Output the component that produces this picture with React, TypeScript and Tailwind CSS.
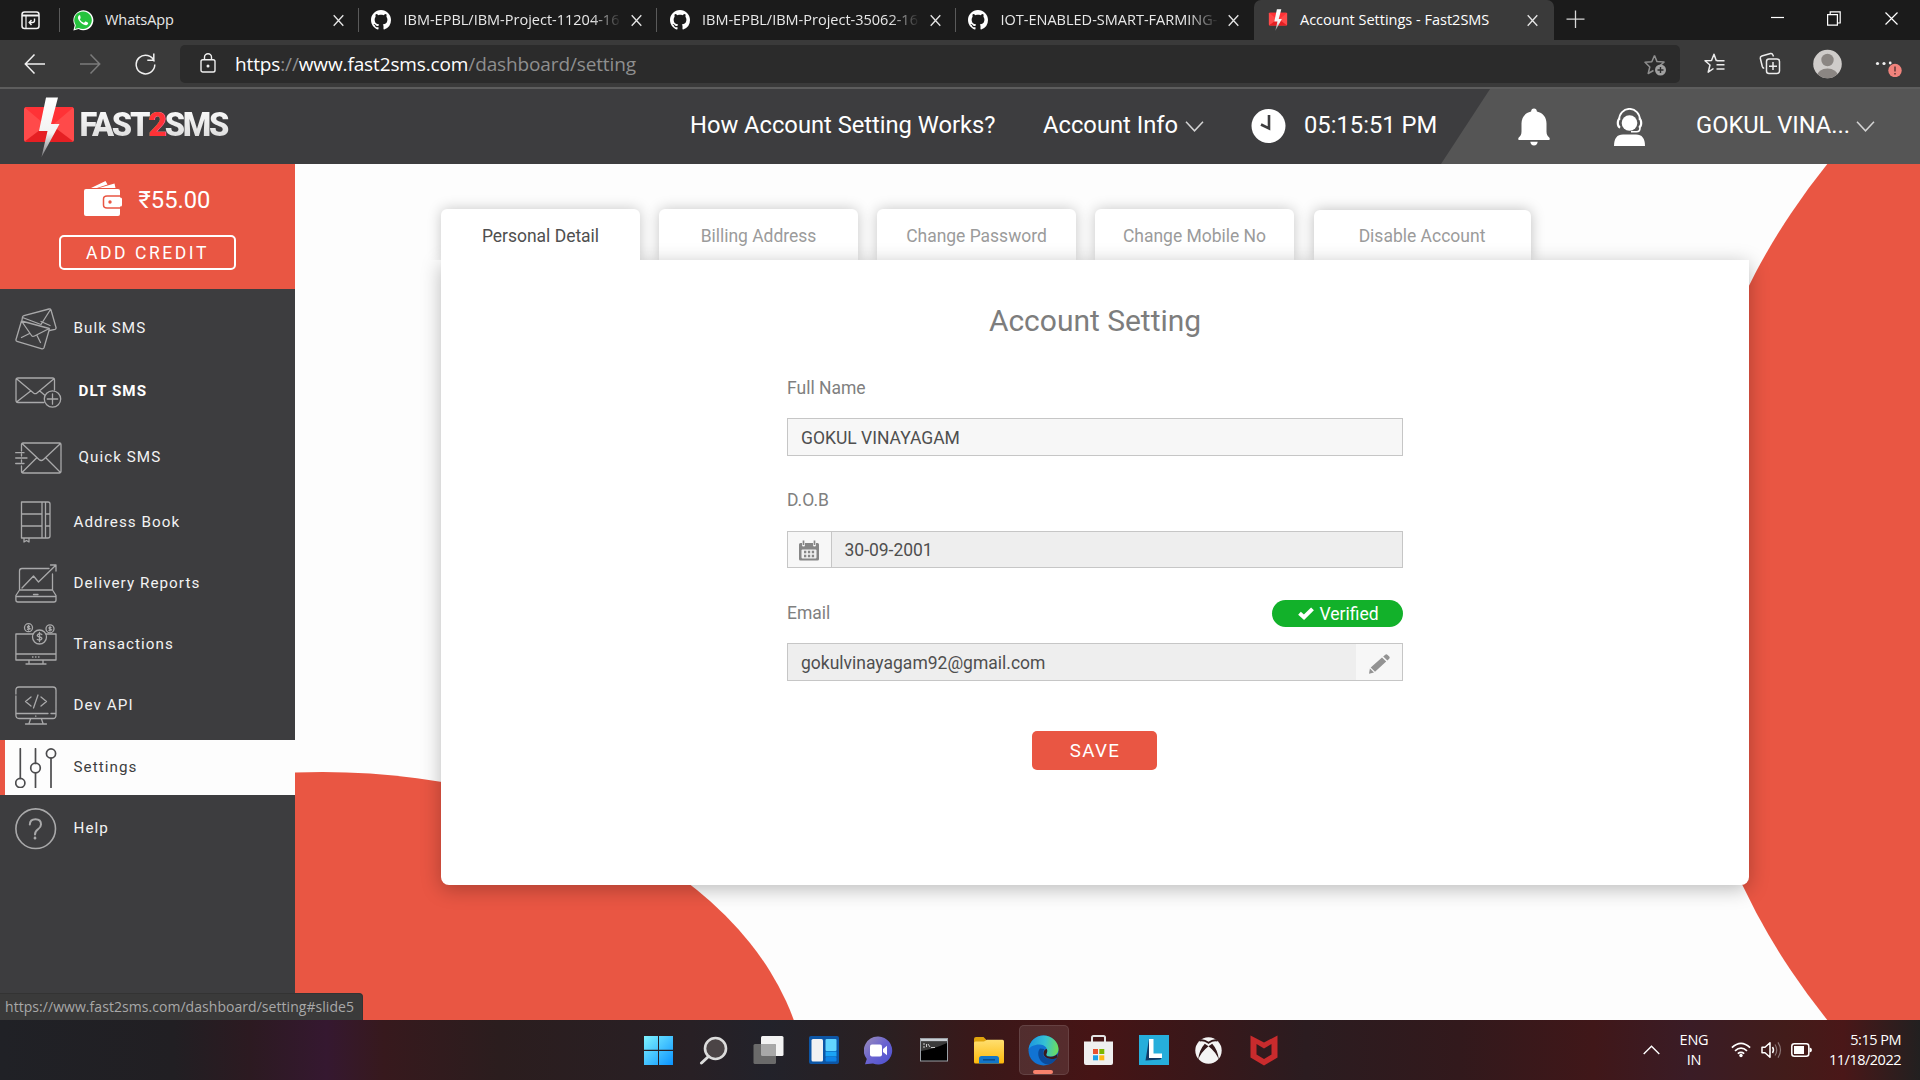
import type { ReactNode } from "react";

const ui = "font-['Open_Sans','Noto_Sans',sans-serif]";

/* ---------- shared icons ---------- */

function CloseX({ className = "" }: { className?: string }) {
  return (
    <svg className={className} width="11" height="13" viewBox="0 0 11 13" fill="none" stroke="#e6e6e6" strokeWidth="1.3">
      <path d="M.7 1.2 10.3 11.8M10.3 1.2.7 11.8" />
    </svg>
  );
}

function GitHubMark() {
  return (
    <svg width="20" height="20" viewBox="0 0 16 16" fill="#fff">
      <path d="M8 0C3.58 0 0 3.58 0 8c0 3.54 2.29 6.53 5.47 7.59.4.07.55-.17.55-.38 0-.19-.01-.82-.01-1.49-2.01.37-2.53-.49-2.69-.94-.09-.23-.48-.94-.82-1.13-.28-.15-.68-.52-.01-.53.63-.01 1.08.58 1.23.82.72 1.21 1.87.87 2.33.66.07-.52.28-.87.51-1.07-1.78-.2-3.64-.89-3.64-3.95 0-.87.31-1.59.82-2.15-.08-.2-.36-1.02.08-2.12 0 0 .67-.21 2.2.82.64-.18 1.32-.27 2-.27s1.36.09 2 .27c1.53-1.04 2.2-.82 2.2-.82.44 1.1.16 1.92.08 2.12.51.56.82 1.27.82 2.15 0 3.07-1.87 3.75-3.65 3.95.29.25.54.73.54 1.48 0 1.07-.01 1.93-.01 2.2 0 .21.15.46.55.38A8.01 8.01 0 0 0 16 8c0-4.42-3.58-8-8-8z" />
    </svg>
  );
}

function WhatsAppMark() {
  return (
    <svg width="21" height="21" viewBox="0 0 21 21">
      <path d="M.4 20.4 1.7 15.3A10 10 0 1 1 5.6 19.1Z" fill="#fff" />
      <path d="M1.8 19 2.8 15.2A8.8 8.8 0 1 1 5.8 17.9Z" fill="#25c33d" />
      <path d="M7.2 5.6c-.3-.6-1-.5-1.4-.1-1.4 1.4-.9 3.4.2 5 1.500 2.300 3.200 3.800 5.800 4.600 1.500.4 3-.4 3.300-1.700.1-.7 0-.8-.4-1l-1.900-.9c-.4-.2-.6-.1-.8.2l-.8 1c-.2.200-.4.200-.7.100-1.600-.7-2.800-1.700-3.600-3.200-.2-.3 0-.5.200-.7.500-.6.700-.9.500-1.300Z" fill="#fff" />
    </svg>
  );
}

function BoltMail({ w, h }: { w: number; h: number }) {
  return (
    <svg className="shrink-0" width={w} height={h} viewBox="0 0 50 60">
      <defs>
        <linearGradient id="boltFade" x1="0" y1="0" x2="0" y2="1">
          <stop offset="0" stopColor="#fff" />
          <stop offset=".6" stopColor="#f2f2f2" />
          <stop offset="1" stopColor="#77777a" />
        </linearGradient>
      </defs>
      <rect y="10" width="50" height="35" rx="2.500" fill="#ff4a4a" />
      <path d="M1 44.300 25 26 49 44.300Q48.500 45 47 45H3Q1.500 45 1 44.300Z" fill="#e51f23" />
      <path d="M1 10.700Q1.500 10 3 10H47Q48.500 10 49 10.700L25 31Z" fill="#ff3236" />
      <path d="M22 .500H34L27 27H35.500L17.500 60 23.500 34H15Z" fill="url(#boltFade)" />
    </svg>
  );
}

function Chevron() {
  return (
    <svg width="19" height="12" viewBox="0 0 19 12" fill="none" stroke="#d4d4d4" strokeWidth="1.500">
      <path d="M1 .800 9.500 9.800 18 .800" />
    </svg>
  );
}

/* ---------- browser chrome ---------- */

function Tab({ icon, title, last }: { icon: ReactNode; title: string; last?: boolean }) {
  return (
    <div className="flex h-10 w-[298.500px] shrink-0 items-center pl-[12.500px]">
      <span className="flex w-[22px] shrink-0">{icon}</span>
      <span className={`ml-[10.500px] w-[218px] overflow-hidden whitespace-nowrap text-[14.500px] leading-5 text-[#e8e8e8] ${title === "WhatsApp" ? "tracking-[-0.050px]" : "[mask-image:linear-gradient(to_right,black_86%,transparent)]"}`}>
        {title}
      </span>
      <CloseX className="ml-[9.500px] mt-px shrink-0" />
      <span className={`ml-auto h-[24px] w-px ${last ? "" : "bg-[#5a5a5a]"}`} />
    </div>
  );
}

function TabStrip() {
  return (
    <div className={`flex h-10 bg-[#1b1b1b] ${ui}`}>
      <div className="flex w-[60px] shrink-0 items-center pl-[21px]">
        <svg width="19" height="19" viewBox="0 0 19 19" fill="none" stroke="#f2f2f2" strokeWidth="1.500">
          <rect x="1" y="1" width="17" height="16.500" rx="2.500" />
          <path d="M1 4.500H18" strokeWidth="2" />
          <path d="M5 5V17" strokeWidth="1.200" />
          <path d="M13.500 7.500V9.500Q13.500 11.500 11.500 11.500H8.500M10.500 9 8.200 11.500 10.500 14" strokeWidth="1.400" />
        </svg>
        <span className="ml-auto h-[24px] w-px bg-[#5a5a5a]" />
      </div>
      <Tab icon={<WhatsAppMark />} title="WhatsApp" />
      <Tab icon={<GitHubMark />} title="IBM-EPBL/IBM-Project-11204-16" />
      <Tab icon={<GitHubMark />} title="IBM-EPBL/IBM-Project-35062-16" />
      <Tab icon={<GitHubMark />} title="IOT-ENABLED-SMART-FARMING-" last />
      <div className="flex w-[300px] shrink-0 items-center rounded-t-[7px] bg-[#3a3a3a] pl-[14px]">
        <BoltMail w={20} h={22} />
        <span className="ml-3 w-[221px] whitespace-nowrap text-[14.500px] leading-5 text-white">Account Settings - Fast2SMS</span>
        <CloseX className="ml-[6px] mt-px" />
      </div>
      <svg className="ml-[12px] mt-[10px]" width="19" height="19" viewBox="0 0 19 19" stroke="#d8d8d8" strokeWidth="1.300">
        <path d="M9.500.500V18M.500 9.200H18.500" />
      </svg>
      <div className="ml-auto flex h-[36px] items-center gap-[42px] pr-[22px]">
        <svg width="14" height="14" viewBox="0 0 14 14" stroke="#fff" strokeWidth="1.200">
          <path d="M0 6.500H13" />
        </svg>
        <svg width="14" height="15" viewBox="0 0 14 15" fill="none" stroke="#fff" strokeWidth="1.200">
          <path d="M.6 3.600H10.400V14.200H.6ZM3.200 3.400V.8H13.200V12H10.600" />
        </svg>
        <svg className="ml-[2px]" width="13" height="13" viewBox="0 0 13 13" stroke="#fff" strokeWidth="1.200">
          <path d="M.500.500 12.500 12.500M12.500.500.500 12.500" />
        </svg>
      </div>
    </div>
  );
}

function AddressBar() {
  return (
    <div className={`flex h-[47px] items-center bg-[#3a3a3a] ${ui}`}>
      <svg className="ml-[24px] shrink-0" width="21" height="22" viewBox="0 0 21 22" fill="none" stroke="#f0f0f0" strokeWidth="1.500">
        <path d="M21 11H1.500M10.500 1.500 1.300 11l9.200 9.500" />
      </svg>
      <svg className="ml-[35px] shrink-0" width="21" height="22" viewBox="0 0 21 22" fill="none" stroke="#7b7b7b" strokeWidth="1.500">
        <path d="M0 11H19.500M10.500 1.500 19.700 11l-9.200 9.500" />
      </svg>
      <svg className="ml-[33.500px] shrink-0" width="21" height="22" viewBox="0 0 21 22" fill="none" stroke="#f0f0f0" strokeWidth="1.500">
        <path d="M19.300 8.500A9.300 9.300 0 1 0 19.800 11.500M18.800.500V7.200H12.300" />
      </svg>
      <div className="ml-[24.500px] flex h-[38px] w-[1500px] shrink-0 items-center rounded-[5px] bg-[#2b2b2b] pl-[20px] pr-[13px]">
        <svg className="-mt-[2px]" width="16" height="20" viewBox="0 0 16 20" fill="none" stroke="#f0f0f0" strokeWidth="1.400">
          <rect x="1" y="6.700" width="14" height="12.300" rx="1.800" />
          <path d="M4.500 6.700V4.300a3.500 3.500 0 0 1 7 0V6.700" />
          <circle cx="8" cy="13" r=".8" fill="#f0f0f0" />
        </svg>
        <span className="ml-[19px] whitespace-nowrap text-[19px] leading-6 tracking-[-0.130px] text-[#8f8f8f]">
          <span className="text-white">https</span>://<span className="text-white">www.fast2sms.com</span>/dashboard/setting
        </span>
        <svg className="ml-auto mt-[2px]" width="23" height="22" viewBox="0 0 23 22">
          <path d="M10.500 1.500 13 7.600 20 8.100 15.500 12M9.500 16.500 4.200 19.500 5.800 13 1 8.300 7.800 7.700 10.500 1.500" fill="none" stroke="#8e8e8e" strokeWidth="1.500" strokeLinejoin="round" />
          <circle cx="16.500" cy="16" r="5.500" fill="#a0a0a0" />
          <path d="M16.500 13V19M13.500 16H19.500" stroke="#2b2b2b" strokeWidth="1.400" />
        </svg>
      </div>
      <svg className="ml-[24px] shrink-0" width="21" height="21" viewBox="0 0 21 21" fill="none" stroke="#ececec" strokeWidth="1.500" strokeLinejoin="round">
        <path d="M13.500 7.500H12.200L10 1.200 7.500 7.500 1 7.700 6 12 4.200 19.200 9.500 15.500M13 7.700H20.500M12.500 11.700H20.500M12.500 16H20.500" />
      </svg>
      <svg className="ml-[33.500px] shrink-0" width="22" height="23" viewBox="0 0 22 23" fill="none" stroke="#ececec" strokeWidth="1.500">
        <rect x="7.500" y="7" width="13" height="14.500" rx="2.500" />
        <path d="M14 10V18M10 14.200H18M14.500 4.500 13.800 2.800Q13.200 1.200 11.500 1.600L2.800 4Q1 4.600 1.300 6.300L3.300 14.500Q3.800 16.200 5.200 16.200" />
      </svg>
      <svg className="ml-[32.500px] shrink-0" width="29" height="34" viewBox="0 0 29 34">
        <clipPath id="avatarClip">
          <circle cx="14.500" cy="17" r="14.300" />
        </clipPath>
        <circle cx="14.500" cy="17" r="14.300" fill="#cfccca" />
        <g clipPath="url(#avatarClip)" fill="#8b8683">
          <circle cx="14.500" cy="13" r="6.200" />
          <ellipse cx="14.500" cy="29" rx="10.500" ry="7.500" />
        </g>
      </svg>
      <svg className="ml-[33px] shrink-0" width="28" height="26" viewBox="0 0 28 26">
        <g fill="#f0f0f0">
          <circle cx="2.500" cy="12.500" r="1.600" />
          <circle cx="9" cy="12.500" r="1.600" />
          <circle cx="15.200" cy="12" r="1.400" />
        </g>
        <circle cx="20" cy="19.500" r="6.700" fill="#f1837c" />
        <path d="M20 15.500V20.500M20 22V23.500" stroke="#4a2b2b" strokeWidth="1.300" />
      </svg>
    </div>
  );
}

/* ---------- site header ---------- */

function SiteHeader() {
  return (
    <header className="relative flex h-[75px] items-center bg-[#3d3d3f] text-[23.750px] leading-[30px] text-white">
      <div className="absolute inset-y-0 right-0 w-[479px] bg-[#555] [clip-path:polygon(49px_0,100%_0,100%_100%,0_100%)]" />
      <div className="relative flex w-full items-center">
        <div className="ml-[24px] flex w-[666px] shrink-0 items-center">
          <BoltMail w={50} h={60} />
          <span className="mb-[3px] ml-[5.500px] bg-gradient-to-b from-white to-[#d6d6d6] bg-clip-text pr-1 font-[Roboto,sans-serif] text-[32.500px] font-black leading-[40px] tracking-[-2.270px] text-transparent">
            FAST<span className="text-[#ff3236]">2</span>SMS
          </span>
        </div>
        <span className="mb-[4px] w-[353px] shrink-0 whitespace-nowrap tracking-[-0.030px]">How Account Setting Works?</span>
        <span className="mb-[4px] w-[142px] shrink-0 whitespace-nowrap">Account Info</span>
        <span className="flex w-[66px] shrink-0">
          <Chevron />
        </span>
        <svg className="shrink-0" width="36" height="36" viewBox="0 0 36 36">
          <circle cx="17.500" cy="17" r="17" fill="#fff" />
          <path d="M18 6V19.500L10 15.500" fill="none" stroke="#3d3d3f" strokeWidth="2.600" />
        </svg>
        <span className="mb-[3px] ml-[17px] w-[214px] shrink-0 whitespace-nowrap">05:15:51 PM</span>
        <svg className="shrink-0" width="32" height="38" viewBox="0 0 32 38" fill="#fff">
          <path d="M16 .500C17.800.500 18.800 1.700 18.900 3.600 25 5 28.500 9.500 28.500 15.500V23.500C28.500 26.500 29.500 28 31 29.300 32.200 30.500 32 32 30.500 32H1.500C0 32-.2 30.500 1 29.300 2.500 28 3.500 26.500 3.500 23.500V15.500C3.500 9.500 7 5 13.100 3.600 13.200 1.700 14.200.500 16 .500ZM12.300 33.800H19.700Q19.300 37.500 16 37.500T12.300 33.800Z" />
        </svg>
        <svg className="ml-[64px] shrink-0" width="31" height="38" viewBox="0 0 31 38">
          <circle cx="15.500" cy="15" r="7.800" fill="#fff" />
          <path d="M5 12A10.500 11.200 0 0 1 26 12" fill="none" stroke="#fff" strokeWidth="1.700" />
          <path d="M6.200 10.500Q3.800 11 3.800 15T6.200 19.500M24.800 10.500Q27.200 11 27.200 15T24.800 19.500" fill="none" stroke="#fff" strokeWidth="2.200" />
          <path d="M26 19.500V20Q26 23.800 22.500 23.800H17" fill="none" stroke="#fff" strokeWidth="1.600" />
          <path d="M0 38Q0 26.500 9 26.500H22Q31 26.500 31 38Z" fill="#fff" />
        </svg>
        <span className="mb-[4px] ml-[51px] w-[160px] shrink-0 whitespace-nowrap tracking-[-0.050px]">GOKUL VINA...</span>
        <Chevron />
      </div>
    </header>
  );
}

/* ---------- sidebar ---------- */

type IconProps = { w: number; h: number; children: ReactNode; stroke?: string };
function Line({ w, h, children, stroke = "#a9a9aa" }: IconProps) {
  return (
    <svg className="shrink-0" width={w} height={h} viewBox={`0 0 ${w} ${h}`} fill="none" stroke={stroke} strokeWidth="1.300" strokeLinejoin="round" strokeLinecap="round">
      {children}
    </svg>
  );
}

const bulkIcon = (
  <Line w={42} h={42}>
    <path d="M6.500 13 1 31.500Q.700 33 2 33.400L27 40.800Q28.500 41 29 39.800L34.300 21.500M6.500 13 34.300 20.500M6.500 13 16.500 27.500Q17.500 29 19.500 28L34.300 20.500M6.500 29.500 14.500 25.500M22 27.500 25.500 34.500" />
    <path d="M7 12 7.500 9Q7.800 8 9 7.700L34 1Q35.500.700 36 2L41 19.500Q41.300 21 40 21.400L34.500 22.500M7.500 9.500 26 16.500 35.500 1.500M26 13.500 35 17.500" />
  </Line>
);
const dltIcon = (
  <Line w={47} h={31}>
    <path d="M29 25.500H3Q1 25.500 1 23.500V3Q1 1 3 1H37.500Q39.500 1 39.500 3V13M1.500 1.700 18.500 16Q20.300 17.400 22 16L39 1.700M1.500 25 16 13.800M24.500 13.800 29.500 18" />
    <circle cx="37.500" cy="22" r="8.200" />
    <path d="M37.500 16.800V27.200M32.300 22H42.700" />
  </Line>
);
const quickIcon = (
  <Line w={47} h={32}>
    <path d="M6.500 9V2.500Q6.500 1 8 1H44.500Q46 1 46 2.500V29.500Q46 31 44.500 31H8Q6.500 31 6.500 29.500V24M7 1.500 24 17.500Q26.300 19.500 28.500 17.500L45.500 1.500M7 30.500 21.500 16M45.500 30.500 31 16M.700 10.700H9M.700 16H12M.700 21.500H9M6.500 12V14M6.500 18V20" />
  </Line>
);
const bookIcon = (
  <Line w={42} h={42}>
    <path d="M6.500 1H33Q35 1 35 3V35Q35 37 33 37H6.500ZM27 1V37M30.500 1V37M6.500 13H27M6.500 25H27M30.500 13H35M30.500 25H35M9 38V41L11.500 39.500 14 41V38" />
  </Line>
);
const reportIcon = (
  <Line w={42} h={39}>
    <path d="M34 4.500H7Q4.500 4.500 4.500 7V26H37.500V10M4.500 26 .900 31.500V36Q.900 38 3 38H39Q41 38 41 36V31.500L37.500 26M.900 32.500H41M18.500 30.500H23M7 24 18.500 12 23.500 18 40.500 1.500M35.500 1H41V7" />
  </Line>
);
const transactionIcon = (
  <Line w={42} h={42}>
    <path d="M18 11H.900V37H41V11H31M.900 31H41M14 37V40.500M28 37V40.500M11 41H31M17.500 34H18M20.500 34H21M23.500 34H24" />
    <circle cx="24.500" cy="14" r="7" />
    <circle cx="13.500" cy="4.700" r="4" />
    <circle cx="35" cy="5.800" r="4" />
    <path d="M26.800 11.500Q24.500 9.800 22.800 11.500T24.500 14 26.500 16.200 22.300 16.500M24.500 9.500V18.500M14.500 3.500Q12.500 3 12.500 4T14.500 5.500 12.500 6.300M13.500 2.500V7M36 4.600Q34 4.100 34 5T36 6.500 34 7.400M35 3.500V8" />
  </Line>
);
const apiIcon = (
  <Line w={42} h={39}>
    <path d="M.900 8V4Q.900 1 4 1H38Q41 1 41 4V29Q41 32.500 38 32.500H4Q.900 32.500 .900 29V10M.900 27.500H33M36 27.500H41M15.500 33 14 37.500M26.500 33 28 37.500M10.500 38H31.500M20.800 30V30.300M16 11 10.500 15.500 16 20M26 11 31.500 15.500 26 20M23 9 18.500 22" />
  </Line>
);
const settingsIcon = (
  <Line w={42} h={40} stroke="#4c4c4e">
    <g strokeWidth="1.700">
      <path d="M5.300.800V30.500M20.500.800V15.500M20.500 25V39.500M36 10V39.500" />
      <circle cx="5.300" cy="35" r="4.600" />
      <circle cx="20.500" cy="20" r="4.800" />
      <circle cx="36" cy="5.500" r="4.600" />
    </g>
  </Line>
);
const helpIcon = (
  <Line w={42} h={42}>
    <circle cx="20.700" cy="20.700" r="19.800" strokeWidth="1.600" />
    <path d="M14.800 16.500Q15 11.300 20.500 11.300T26 16.500Q26 19 23 21.300 20 23.500 20 26.500" strokeWidth="2" />
    <path d="M20 29.800V30.200" strokeWidth="2.600" />
  </Line>
);

function Item({ icon, label, box, text = "" }: { icon: ReactNode; label: string; box: string; text?: string }) {
  return (
    <div className={`flex items-center ${box}`}>
      <span className="flex w-[58.500px] shrink-0">{icon}</span>
      <span className={`whitespace-nowrap text-[15.200px] leading-5 tracking-[1.060px] ${text}`}>{label}</span>
    </div>
  );
}

function Sidebar() {
  return (
    <aside className="flex w-[295px] shrink-0 flex-col bg-[#3d3d3f] text-[#f3f3f3]">
      <div className="flex h-[125px] flex-col items-center bg-[#e95643] text-white">
        <div className="mt-[12px] flex h-[46px] w-[127px] items-center">
          <svg className="shrink-0" width="39" height="38" viewBox="0 0 39 38">
            <path d="M7 8 21.500 1 23.500 4.500 13 8ZM15 8 30.500 3.500 31.500 8Z" fill="#fff" />
            <path d="M2 9H34Q36 9 36 11V34Q36 36 34 36H2Q0 36 0 34V11Q0 9 2 9Z" fill="#fff" />
            <path d="M36 16H23Q19.500 16 19.500 19V25Q19.500 28 23 28H36" fill="none" stroke="#e95643" strokeWidth="1.500" />
            <rect x="21" y="17.500" width="17" height="9" rx="1.500" fill="#fff" />
            <circle cx="26" cy="22" r="1.700" fill="#e95643" />
          </svg>
          <span className="ml-[15.500px] mt-[1px] whitespace-nowrap text-[23.750px] leading-[30px]">₹55.00</span>
        </div>
        <div className="mt-[13px] flex h-[35px] w-[177px] items-center justify-center rounded-[5px] border-2 border-white text-[17.500px] leading-5 tracking-[2.550px]">
          ADD CREDIT
        </div>
      </div>
      <Item icon={bulkIcon} label="Bulk SMS" box="mt-[8px] h-[63px] pl-[15px]" text="mb-[2px]" />
      <Item icon={dltIcon} label="DLT SMS" box="h-[64px] pl-[15px]" text="mb-[2px] ml-[5px] font-bold text-white" />
      <Item icon={quickIcon} label="Quick SMS" box="h-[67px] pl-[15px]" text="mb-[2px] ml-[5px]" />
      <Item icon={bookIcon} label="Address Book" box="h-[62px] pl-[15px]" />
      <Item icon={reportIcon} label="Delivery Reports" box="h-[60px] pl-[15px]" />
      <Item icon={transactionIcon} label="Transactions" box="h-[62px] pl-[15px]" />
      <Item icon={apiIcon} label="Dev API" box="mb-[4px] h-[61px] pl-[15px]" text="mb-[2px]" />
      <Item icon={settingsIcon} label="Settings" box="h-[55px] border-l-[5px] border-[#e95643] bg-[#fdfdfd] pl-[10px]" text="mb-[2px] text-[#3d3d3f]" />
      <Item icon={helpIcon} label="Help" box="mt-[3px] h-[62px] pl-[15px]" text="mb-[2px]" />
    </aside>
  );
}

/* ---------- settings card ---------- */

const tabBase =
  "flex h-[52px] w-[199px] items-start justify-center rounded-t-[6px] bg-white pt-[15px] text-[17.500px] leading-[24px] tracking-[-0.020px] shadow-[0_0_14px_rgba(0,0,0,0.22)]";

function Card() {
  return (
    <div className="ml-[146px] mt-[45px] w-[1308px]">
      <div className="flex h-[51px] gap-[19px]">
        <div className={`${tabBase} relative z-20 text-[#4f4f4f] [clip-path:inset(-20px_-20px_1px_-20px)]`}>Personal Detail</div>
        <div className={`${tabBase} text-[#9b9b9b]`}>Billing Address</div>
        <div className={`${tabBase} text-[#9b9b9b]`}>Change Password</div>
        <div className={`${tabBase} text-[#9b9b9b]`}>Change Mobile No</div>
        <div className="ml-[.500px] mt-px flex h-[51px] w-[217px] items-start justify-center rounded-t-[6px] bg-white pt-[14px] text-[17.500px] leading-[24px] text-[#9b9b9b] shadow-[0_0_14px_rgba(0,0,0,0.25)]">
          Disable Account
        </div>
      </div>
      <section className="relative z-10 flex h-[625px] flex-col items-center rounded-b-[8px] bg-white shadow-[0_4px_20px_rgba(0,0,0,0.27)]">
        <h1 className="mt-[41px] text-[30px] leading-[40px] tracking-[-0.020px] text-[#7d7d7d]">Account Setting</h1>
        <div className="mt-[35px] w-[616px] text-[17.500px] leading-[24px] text-[#4f4f4f]">
          <div className="text-[#808080]">Full Name</div>
          <div className="mt-[18px] flex h-[38px] items-center border border-[#c6c6c6] bg-[#f7f7f7] pl-[13px] pt-[2px]">GOKUL VINAYAGAM</div>
          <div className="mt-[32px] text-[#808080]">D.O.B</div>
          <div className="mt-[19px] flex h-[37px] border border-[#c6c6c6] bg-[#eee]">
            <span className="flex w-[44px] items-center justify-center border-r border-[#c6c6c6] bg-[#f7f7f7] pr-px pt-px">
              <svg width="20" height="21" viewBox="0 0 20 21">
                <path d="M1.500 3H3V5Q3 6.500 4.500 6.500T6 5V3H14V5Q14 6.500 15.500 6.500T17 5V3H18.500Q20 3 20 4.500V19Q20 20.500 18.500 20.500H1.500Q0 20.500 0 19V4.500Q0 3 1.500 3Z" fill="#868686" />
                <path d="M4.500.500V5M15.500.500V5" stroke="#868686" strokeWidth="1.700" />
                <rect x="2.500" y="9.500" width="15" height="9" rx="1" fill="#f0f0f0" />
                <path d="M5 10.700H7.300V13.200H5ZM8.900 10.700H11.200V13.200H8.900ZM12.800 10.700H15.100V13.200H12.800ZM5 14.700H7.300V17.200H5ZM8.900 14.700H11.200V17.200H8.900ZM12.800 14.700H15.100V17.200H12.800Z" fill="#868686" />
              </svg>
            </span>
            <span className="flex items-center pl-[12.500px] tracking-[-0.020px]">30-09-2001</span>
          </div>
          <div className="mt-[32px] flex h-[27px] items-center justify-between">
            <span className="pb-px text-[#808080]">Email</span>
            <span className="flex h-[27px] w-[131px] items-center justify-center gap-[5px] rounded-full bg-[#12b12a] pl-[2px] text-white">
              <svg width="16" height="13" viewBox="0 0 16 13" fill="none" stroke="#fff" strokeWidth="4">
                <path d="M1.500 6.200 6 10.200 14.500 1.800" />
              </svg>
              Verified
            </span>
          </div>
          <div className="mt-[16px] flex h-[38px] items-stretch justify-between border border-[#c6c6c6] bg-[#eee]">
            <span className="flex items-center pl-[13px] pt-[2px]">gokulvinayagam92@gmail.com</span>
            <span className="flex w-[46px] items-center justify-center bg-[#f7f7f7] pt-[4px]">
              <svg width="21" height="20" viewBox="0 0 21 20" fill="#939393">
                <path d="M0 19.800.900 14.500 5 18.500ZM1.700 13.500 13 3.500 17.200 7.500 6 17.800ZM14.200 2.500 16 .900Q17.300-.200 18.600.900L20.200 2.500Q21.200 3.600 20.200 4.700L18.400 6.400Z" />
              </svg>
            </span>
          </div>
        </div>
        <div className="mr-px mt-[50px] flex h-[39px] w-[125px] items-center justify-center rounded-[5px] bg-[#e95643] pl-[1px] text-[18.750px] leading-6 tracking-[1.300px] text-white">
          SAVE
        </div>
      </section>
    </div>
  );
}

/* ---------- taskbar ---------- */

const taskIcons: ReactNode[] = [
  <svg width="29" height="29" viewBox="0 0 29 29">
    <linearGradient id="win" x1="0" y1="0" x2="1" y2="1">
      <stop offset="0" stopColor="#7ff3ff" />
      <stop offset="1" stopColor="#0a93ff" />
    </linearGradient>
    <path d="M0 0H14V13.800H0ZM15 0H29V13.800H15ZM0 15H14V29H0ZM15 15H29V29H15Z" fill="url(#win)" />
  </svg>,
  <svg width="29" height="29" viewBox="0 0 29 29" fill="none" stroke="#dcdcdc">
    <circle cx="16.500" cy="12.500" r="10.500" fill="#4b4446" strokeWidth="2.600" />
    <path d="M9.500 20.500 2.500 27" strokeWidth="3" strokeLinecap="round" />
  </svg>,
  <svg width="31" height="28" viewBox="0 0 31 28">
    <rect x="8" width="22.500" height="20" rx="1.500" fill="#f3f3f3" />
    <rect x=".500" y="8" width="22.500" height="20" rx="1.500" fill="#6a6a6a" />
    <path d="M8 8H21.500Q23 8 23 9.500V20H9.500Q8 20 8 18.500Z" fill="#a8a8a8" />
  </svg>,
  <svg width="30" height="28" viewBox="0 0 30 28">
    <rect width="30" height="28" rx="2" fill="#0d56a6" />
    <rect x="2.500" y="3" width="11.500" height="22.500" rx="1.500" fill="#f2f2f2" />
    <rect x="16.500" y="3" width="11" height="12" rx="1" fill="#62d5ff" />
    <rect x="16.500" y="15.500" width="11" height="5" fill="#1ba4f5" />
    <rect x="16.500" y="21" width="11" height="4.500" rx="1" fill="#0f84e6" />
  </svg>,
  <svg width="29" height="29" viewBox="0 0 29 29">
    <linearGradient id="chat" x1="0" y1="0" x2="1" y2="1">
      <stop offset="0" stopColor="#9d8fb8" />
      <stop offset=".5" stopColor="#6a63d0" />
      <stop offset="1" stopColor="#4a4fd0" />
    </linearGradient>
    <path d="M14.500.500A14 14 0 1 1 9 27.500L1 28.300 2.800 23A14 14 0 0 1 14.500.500Z" fill="url(#chat)" />
    <rect x="6" y="8.500" width="12" height="12" rx="2" fill="#fff" />
    <path d="M19 13 23 9.800V19.200L19 16Z" fill="#fff" />
  </svg>,
  <svg width="28" height="24" viewBox="0 0 28 24">
    <rect x=".500" y=".500" width="27" height="22.500" fill="#000" stroke="#9aa0a6" />
    <path d="M1 1H27V3.500H1Z" fill="#c9ced3" />
    <path d="M1 13Q14 11 27 5V3.500H1Z" fill="#3a3a3a" />
    <path d="M3 6H5M3 9H5M6.500 6V9M8 6 10 9M11 9.500H15" stroke="#c8c8c8" strokeWidth="1" />
  </svg>,
  <svg width="30" height="28" viewBox="0 0 30 28">
    <linearGradient id="folder" x1="0" y1="0" x2="0" y2="1">
      <stop offset="0" stopColor="#ffdf70" />
      <stop offset="1" stopColor="#fdb90b" />
    </linearGradient>
    <path d="M0 3Q0 1 2 1H9.500L13 4.500V10H0Z" fill="#dfa30d" />
    <path d="M0 7Q0 5.500 1.500 5.500H10L13 3.800H28.500Q30 3.800 30 5.500V26Q30 27.500 28.500 27.500H1.500Q0 27.500 0 26Z" fill="url(#folder)" />
    <path d="M5 27.500V22.500Q5 20 7.500 20H22.500Q25 20 25 22.500V27.500Z" fill="#1276c9" />
    <path d="M9 23.800H21" stroke="#0a4b8a" strokeWidth="1.500" />
  </svg>,
  <svg width="31" height="31" viewBox="0 0 31 31">
    <linearGradient id="edgeTop" x1="0" y1=".3" x2="1" y2=".4">
      <stop offset="0" stopColor="#1b95e0" />
      <stop offset=".55" stopColor="#35c1d4" />
      <stop offset="1" stopColor="#6cde5c" />
    </linearGradient>
    <circle cx="15.500" cy="15.500" r="15" fill="#1173d3" />
    <path d="M.600 14.500C1.500 6 8 .500 15.500.500 24 .500 30.500 7 30.500 14 30.500 19 26.500 21.500 22.500 21.500 19 21.500 17.800 20.200 18.500 18.800 21 14 17 9.500 11.500 9.500 6 9.500 1.500 12 .600 14.500Z" fill="url(#edgeTop)" />
    <path d="M12 13.500C8 18 11 29 20.500 29.600 24.500 28.500 28 25.500 28.800 22.800 25 25 18 24.500 15.500 20.500 14.500 18 15 16 16.500 14Z" fill="#0b4a9a" />
    <path d="M18.800 14C20 16.500 18.500 18.500 18.300 19.200 18 21 20 21.700 22.500 21.700 26 21.700 28.500 20.500 29.500 18.500L29 22.500C26 25 18.500 24.500 16 20.500 14.800 17.500 16 14.500 18.800 14Z" fill="#3a1a1c" />
  </svg>,
  <svg width="29" height="30" viewBox="0 0 29 30">
    <path d="M8 9V2.500Q8 1 9.500 1H19.500Q21 1 21 2.500V9" fill="none" stroke="#e4e4e4" strokeWidth="2" />
    <path d="M0 6.500H29V28Q29 30 27 30H2Q0 30 0 28Z" fill="#efefef" />
    <path d="M9 14H14V19H9Z" fill="#e8512e" />
    <path d="M15.300 14H20.300V19H15.300Z" fill="#7db700" />
    <path d="M9 20.300H14V25.300H9Z" fill="#1ba0e8" />
    <path d="M15.300 20.300H20.300V25.300H15.300Z" fill="#fdb813" />
  </svg>,
  <svg width="30" height="30" viewBox="0 0 30 30">
    <rect width="30" height="30" fill="#26aedb" />
    <path d="M6.500 25.500 10 4V20.500L23 22.500 21.500 24.500Z" fill="#123a66" />
    <path d="M10 4H14.500V18.500H23V23H10Z" fill="#fff" />
  </svg>,
  <svg width="27" height="27" viewBox="0 0 27 27">
    <circle cx="13.500" cy="13.500" r="13.200" fill="#f4f4f4" />
    <path d="M4.500 3.600Q8.500 2.300 13.500 5.800 18.500 2.300 22.500 3.600" fill="none" stroke="#33191b" strokeWidth="1.800" />
    <path d="M9.800 6.800Q4 13 3 23.500 5.500 15.500 13.500 9.300 21.500 15.500 24 23.500 23 13 17.200 6.800L13.500 9.300Z" fill="#33191b" />
  </svg>,
  <svg width="28" height="31" viewBox="0 0 28 31">
    <path d="M.500.500 14 7.500 27.500.500V22.500L14 30.500.500 22.500ZM6.500 9V19.500L14 24 21.500 19.500V9L14 13.500Z" fill="#c92b2d" fillRule="evenodd" />
  </svg>,
];

function Taskbar() {
  return (
    <footer className={`flex h-[60px] items-center bg-[linear-gradient(to_right,#202126_0%,#211f23_9%,#2c1a21_13%,#351830_17%,#37191d_20%,#2b1d1e_26%,#282025_36%,#22222a_40%,#2a2022_46%,#3a1819_51%,#461415_57%,#3a1719_62%,#2b1c20_68%,#32191c_76%,#401719_83%,#3a1c26_88%,#421c1a_93%,#4a1718_96%,#222020_100%)] pl-[631px] text-white ${ui}`}>
      {taskIcons.map((icon, i) => (
        <div key={i} className="relative flex h-[50px] w-[55px] shrink-0 items-center justify-center">
          {i === 7 && <span className="absolute inset-x-[2.500px] inset-y-0 rounded-[5px] border border-white/10 bg-white/10" />}
          <span className="relative flex">{icon}</span>
          {i === 7 && <span className="absolute bottom-px left-[17px] h-[4px] w-[20px] rounded-full bg-[#f8826d]" />}
        </div>
      ))}
      <div className="ml-auto flex items-center pr-[19px] text-[14.500px] leading-[20px]">
        <svg width="17" height="10" viewBox="0 0 17 10" fill="none" stroke="#fff" strokeWidth="1.400">
          <path d="M.700 9 8.500 1.300 16.300 9" />
        </svg>
        <div className="ml-[18.500px] w-[32px] text-center tracking-[-0.200px]">
          ENG
          <br />
          IN
        </div>
        <svg className="ml-[21px]" width="20" height="16" viewBox="0 0 20 16" fill="none" stroke="#fff" strokeWidth="1.700">
          <path d="M.900 5.600Q10-3 19.100 5.600M4 8.800Q10 3.500 16 8.800M6.800 11.700Q10 9.200 13.200 11.700" />
          <circle cx="10" cy="13.500" r="1.700" fill="#fff" stroke="none" />
        </svg>
        <svg className="ml-[9.500px]" width="21" height="18" viewBox="0 0 21 18" fill="none" stroke="#fff" strokeWidth="1.500">
          <path d="M1 6.200H4L9 1.700V16.300L4 11.800H1Z" strokeLinejoin="round" />
          <path d="M11.500 6Q13.500 9 11.500 12" />
          <path d="M14 3.500Q17.500 9 14 14.500M17 1.300Q22 9 17 16.700" stroke="#8a7474" strokeWidth="1.200" />
        </svg>
        <svg className="ml-[9.500px]" width="21" height="14" viewBox="0 0 21 14">
          <rect x=".800" y=".800" width="17" height="12.400" rx="2.500" fill="none" stroke="#fff" strokeWidth="1.500" />
          <path d="M3 3H13V11H3Z" fill="#fff" />
          <path d="M18.500 4.500Q21 4.700 21 7T18.500 9.500Z" fill="#fff" />
        </svg>
        <div className="ml-[15px] w-[74px] whitespace-nowrap text-right tracking-[-0.500px]">
          5:15 PM
          <br />
          11/18/2022
        </div>
      </div>
    </footer>
  );
}

export default function App() {
  return (
    <div className="flex h-[1080px] w-[1920px] flex-col overflow-hidden bg-[#fdfdfd] font-[Roboto,sans-serif]">
      <TabStrip />
      <AddressBar />
      <div className="h-[2px] bg-[#5d5d5d]" />
      <SiteHeader />
      <div className="relative flex h-[856px] shrink-0 overflow-hidden">
        <Sidebar />
        <main className="relative flex-1 overflow-hidden">
          <div className="absolute left-[-457px] top-[608px] h-[646px] w-[969px] rounded-[50%] bg-[#e95643]" />
          <div className="absolute left-[1381px] top-[-253px] h-[1362px] w-[1362px] rounded-full bg-[#e95643]" />
          <div className="relative">
            <Card />
          </div>
        </main>
        <div className={`absolute bottom-0 left-0 flex h-[27px] w-[363px] items-center whitespace-nowrap rounded-tr-[4px] border-r border-t border-[#333] bg-[#3a3a3a] pl-[5px] text-[14px] leading-5 tracking-[0.050px] text-[#a8a8a8] ${ui}`}>
          https://www.fast2sms.com/dashboard/setting#slide5
        </div>
      </div>
      <Taskbar />
    </div>
  );
}
